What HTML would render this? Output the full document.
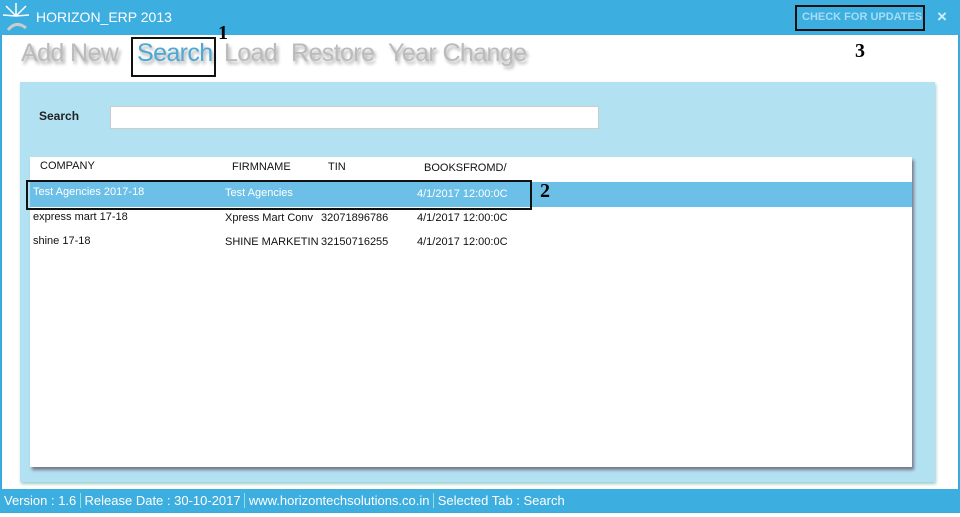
<!DOCTYPE html>
<html><head><style>
body{margin:0;width:960px;height:517px;background:#fff;position:relative;overflow:hidden;font-family:"Liberation Sans",sans-serif}
.a{position:absolute}
.t{position:absolute;top:39px;font-size:25px;letter-spacing:-0.6px;color:#bbb;text-shadow:2px 3px 3px #aaa;white-space:pre}
</style></head><body>
<div class="a" style="left:0;top:0;width:960px;height:513px;border:2px solid #3aa9dc;box-sizing:border-box"></div>
<div class="a" style="left:0;top:0;width:960px;height:35px;background:#3daee0"></div>
<svg class="a" style="left:2px;top:2px" width="28" height="32"><g stroke="#fff" stroke-width="1.5"><line x1="14" y1="14" x2="14" y2="1"/><line x1="14" y1="14" x2="4" y2="4"/><line x1="14" y1="14" x2="24" y2="4"/><line x1="14" y1="14" x2="1" y2="13"/><line x1="14" y1="14" x2="27" y2="13"/></g><path d="M6 28 Q14 18 24 26" stroke="#ccc" stroke-width="3" fill="none"/></svg>
<div class="a" style="left:36px;top:9px;color:#fff;font-size:14px">HORIZON_ERP 2013</div>
<div class="a" style="left:795px;top:5px;width:130px;height:26px;border:2px solid #111;box-sizing:border-box"></div>
<div class="a" style="left:802px;top:11px;color:#a8dcf5;font-size:11px;font-weight:bold">CHECK FOR UPDATES</div>
<div class="a" style="left:937px;top:7px;color:#cdeefc;font-size:17px;font-weight:bold">×</div>
<div class="t" style="left:21px">Add New</div>
<div class="t" style="left:137px;color:#4da8d4">Search</div>
<div class="t" style="left:224px">Load</div>
<div class="t" style="left:291px">Restore</div>
<div class="t" style="left:388px">Year Change</div>
<div class="a" style="left:131px;top:37px;width:85px;height:40px;border:2px solid #111;box-sizing:border-box"></div>
<div class="a" style="left:218px;top:22px;font-family:'Liberation Serif';font-weight:bold;font-size:20px">1</div>
<div class="a" style="left:855px;top:40px;font-family:'Liberation Serif';font-weight:bold;font-size:20px">3</div>
<div class="a" style="left:20px;top:82px;width:915px;height:400px;background:#b2e2f2;box-shadow:1px 2px 3px #9cc"></div>
<div class="a" style="left:39px;top:109px;font-size:12px;font-weight:bold;color:#222">Search</div>
<div class="a" style="left:110px;top:106px;width:489px;height:23px;background:#fff;border:1px solid #ccc;box-sizing:border-box"></div>
<div class="a" style="left:30px;top:157px;width:882px;height:310px;background:#fff;box-shadow:2px 3px 3px #778"></div>
<div class="a" style="left:30px;top:182px;width:882px;height:25px;background:#6cc0e8"></div>
<div class="a" style="left:26px;top:180px;width:506px;height:30px;border:2px solid #111;box-sizing:border-box"></div>
<div class="a" style="left:540px;top:180px;font-family:'Liberation Serif';font-weight:bold;font-size:20px">2</div>
<div class="a" style="font-size:11px;color:#111;left:0;top:0;width:960px">
<div class="a" style="left:40px;top:160px">COMPANY</div><div class="a" style="left:232px;top:161px">FIRMNAME</div><div class="a" style="left:328px;top:161px">TIN</div><div class="a" style="left:424px;top:162px">BOOKSFROMD/</div>
<div class="a" style="left:33px;top:186px;color:#fff">Test Agencies 2017-18</div><div class="a" style="left:225px;top:187px;color:#fff">Test Agencies</div><div class="a" style="left:417px;top:188px;color:#fff">4/1/2017 12:00:0C</div>
<div class="a" style="left:33px;top:211px">express mart 17-18</div><div class="a" style="left:225px;top:212px">Xpress Mart Conv</div><div class="a" style="left:321px;top:212px">32071896786</div><div class="a" style="left:417px;top:212px">4/1/2017 12:00:0C</div>
<div class="a" style="left:33px;top:235px">shine 17-18</div><div class="a" style="left:225px;top:236px">SHINE MARKETIN</div><div class="a" style="left:321px;top:236px">32150716255</div><div class="a" style="left:417px;top:236px">4/1/2017 12:00:0C</div>
</div>
<div class="a" style="left:0;top:489px;width:960px;height:23px;background:#3daee0"></div>
<div class="a" style="left:4px;top:493px;color:#fff;font-size:13px;white-space:pre">Version : 1.6 <span style="border-left:1px solid #9dd"> </span>Release Date : 30-10-2017 <span style="border-left:1px solid #9dd"> </span>www.horizontechsolutions.co.in <span style="border-left:1px solid #9dd"> </span>Selected Tab : Search</div>
</body></html>
